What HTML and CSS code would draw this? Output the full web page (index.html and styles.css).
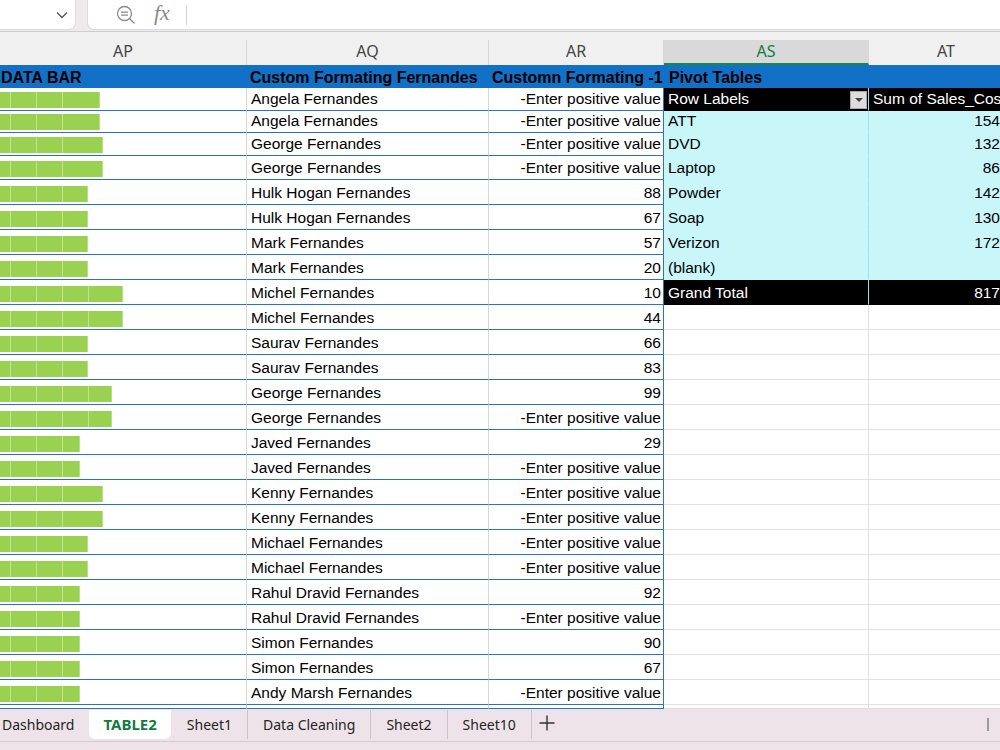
FILE: index.html
```html
<!DOCTYPE html>
<html lang="en">
<head>
  <meta charset="UTF-8" />
  <title>TABLE2</title>
  <link rel="stylesheet" href="styles.css">
</head>
<body>

<div class="toolbar">
  <div class="namebox">
    <svg width="12" height="8" viewBox="0 0 12 8"><path d="M1 1.5 L6 6.5 L11 1.5" fill="none" stroke="#555" stroke-width="1.3"/></svg>
  </div>
  <div class="formula">
    <svg width="20" height="20" viewBox="0 0 20 20"><circle cx="8.5" cy="8.5" r="7" fill="none" stroke="#8a8a8a" stroke-width="1.3"/><path d="M5 7.2 H12 M5 10.2 H12 M13.5 13.5 L18.5 18.5" stroke="#8a8a8a" stroke-width="1.3" fill="none"/></svg>
    <span class="fx">fx</span>
    <span class="sep"></span>
  </div>
</div>

<div class="colheads">
  <div class="ch">AP</div>
  <div class="ch">AQ</div>
  <div class="ch">AR</div>
  <div class="ch sel">AS</div>
  <div class="ch">AT</div>
</div>

<div class="sheet">
  <div class="row hdr">
    <div class="c">DATA BAR</div>
    <div class="c">Custom Formating Fernandes</div>
    <div class="c">Customn Formating -1</div>
    <div class="c pt">Pivot Tables</div>
  </div>

  <div class="row h23">
    <div class="c bar"><div class="db" style="width:100px"></div></div>
    <div class="c">Angela Fernandes</div>
    <div class="c ar">-Enter positive value</div>
    <div class="c pk">Row Labels<span class="dd"></span></div>
    <div class="c pk">Sum of Sales_Cost</div>
  </div>
  <div class="row h22">
    <div class="c bar"><div class="db" style="width:100px"></div></div>
    <div class="c">Angela Fernandes</div>
    <div class="c ar">-Enter positive value</div>
    <div class="c p">ATT</div>
    <div class="c p num">154</div>
  </div>
  <div class="row h23">
    <div class="c bar"><div class="db" style="width:103px"></div></div>
    <div class="c">George Fernandes</div>
    <div class="c ar">-Enter positive value</div>
    <div class="c p">DVD</div>
    <div class="c p num">132</div>
  </div>
  <div class="row h24">
    <div class="c bar"><div class="db" style="width:103px"></div></div>
    <div class="c">George Fernandes</div>
    <div class="c ar">-Enter positive value</div>
    <div class="c p">Laptop</div>
    <div class="c p num">86</div>
  </div>
  <div class="row">
    <div class="c bar"><div class="db" style="width:88px"></div></div>
    <div class="c">Hulk Hogan Fernandes</div>
    <div class="c ar">88</div>
    <div class="c p">Powder</div>
    <div class="c p num">142</div>
  </div>
  <div class="row">
    <div class="c bar"><div class="db" style="width:88px"></div></div>
    <div class="c">Hulk Hogan Fernandes</div>
    <div class="c ar">67</div>
    <div class="c p">Soap</div>
    <div class="c p num">130</div>
  </div>
  <div class="row">
    <div class="c bar"><div class="db" style="width:88px"></div></div>
    <div class="c">Mark Fernandes</div>
    <div class="c ar">57</div>
    <div class="c p">Verizon</div>
    <div class="c p num">172</div>
  </div>
  <div class="row">
    <div class="c bar"><div class="db" style="width:88px"></div></div>
    <div class="c">Mark Fernandes</div>
    <div class="c ar">20</div>
    <div class="c p">(blank)</div>
    <div class="c p num"></div>
  </div>
  <div class="row">
    <div class="c bar"><div class="db" style="width:123px"></div></div>
    <div class="c">Michel Fernandes</div>
    <div class="c ar">10</div>
    <div class="c pk">Grand Total</div>
    <div class="c pk num">817</div>
  </div>
  <div class="row">
    <div class="c bar"><div class="db" style="width:123px"></div></div>
    <div class="c">Michel Fernandes</div>
    <div class="c ar">44</div>
    <div class="c e"></div>
    <div class="c e"></div>
  </div>
  <div class="row">
    <div class="c bar"><div class="db" style="width:88px"></div></div>
    <div class="c">Saurav Fernandes</div>
    <div class="c ar">66</div>
    <div class="c e"></div>
    <div class="c e"></div>
  </div>
  <div class="row">
    <div class="c bar"><div class="db" style="width:88px"></div></div>
    <div class="c">Saurav Fernandes</div>
    <div class="c ar">83</div>
    <div class="c e"></div>
    <div class="c e"></div>
  </div>
  <div class="row">
    <div class="c bar"><div class="db" style="width:112px"></div></div>
    <div class="c">George Fernandes</div>
    <div class="c ar">99</div>
    <div class="c e"></div>
    <div class="c e"></div>
  </div>
  <div class="row">
    <div class="c bar"><div class="db" style="width:112px"></div></div>
    <div class="c">George Fernandes</div>
    <div class="c ar">-Enter positive value</div>
    <div class="c e"></div>
    <div class="c e"></div>
  </div>
  <div class="row">
    <div class="c bar"><div class="db" style="width:80px"></div></div>
    <div class="c">Javed Fernandes</div>
    <div class="c ar">29</div>
    <div class="c e"></div>
    <div class="c e"></div>
  </div>
  <div class="row">
    <div class="c bar"><div class="db" style="width:80px"></div></div>
    <div class="c">Javed Fernandes</div>
    <div class="c ar">-Enter positive value</div>
    <div class="c e"></div>
    <div class="c e"></div>
  </div>
  <div class="row">
    <div class="c bar"><div class="db" style="width:103px"></div></div>
    <div class="c">Kenny Fernandes</div>
    <div class="c ar">-Enter positive value</div>
    <div class="c e"></div>
    <div class="c e"></div>
  </div>
  <div class="row">
    <div class="c bar"><div class="db" style="width:103px"></div></div>
    <div class="c">Kenny Fernandes</div>
    <div class="c ar">-Enter positive value</div>
    <div class="c e"></div>
    <div class="c e"></div>
  </div>
  <div class="row">
    <div class="c bar"><div class="db" style="width:88px"></div></div>
    <div class="c">Michael Fernandes</div>
    <div class="c ar">-Enter positive value</div>
    <div class="c e"></div>
    <div class="c e"></div>
  </div>
  <div class="row">
    <div class="c bar"><div class="db" style="width:88px"></div></div>
    <div class="c">Michael Fernandes</div>
    <div class="c ar">-Enter positive value</div>
    <div class="c e"></div>
    <div class="c e"></div>
  </div>
  <div class="row">
    <div class="c bar"><div class="db" style="width:80px"></div></div>
    <div class="c">Rahul Dravid Fernandes</div>
    <div class="c ar">92</div>
    <div class="c e"></div>
    <div class="c e"></div>
  </div>
  <div class="row">
    <div class="c bar"><div class="db" style="width:80px"></div></div>
    <div class="c">Rahul Dravid Fernandes</div>
    <div class="c ar">-Enter positive value</div>
    <div class="c e"></div>
    <div class="c e"></div>
  </div>
  <div class="row">
    <div class="c bar"><div class="db" style="width:80px"></div></div>
    <div class="c">Simon Fernandes</div>
    <div class="c ar">90</div>
    <div class="c e"></div>
    <div class="c e"></div>
  </div>
  <div class="row">
    <div class="c bar"><div class="db" style="width:80px"></div></div>
    <div class="c">Simon Fernandes</div>
    <div class="c ar">67</div>
    <div class="c e"></div>
    <div class="c e"></div>
  </div>
  <div class="row">
    <div class="c bar"><div class="db" style="width:80px"></div></div>
    <div class="c">Andy Marsh Fernandes</div>
    <div class="c ar">-Enter positive value</div>
    <div class="c e"></div>
    <div class="c e"></div>
  </div>
  <div class="row cut">
    <div class="c"></div>
    <div class="c"></div>
    <div class="c ar"></div>
    <div class="c e"></div>
    <div class="c e"></div>
  </div>
</div>

<div class="tabs">
  <div class="strip">
    <div class="tab first">Dashboard</div>
    <div class="tab active">TABLE2</div>
    <div class="tab">Sheet1</div>
    <div class="tab">Data Cleaning</div>
    <div class="tab">Sheet2</div>
    <div class="tab">Sheet10</div>
    <div class="add">
      <svg width="16" height="16" viewBox="0 0 16 16"><path d="M8 0.5 V15.5 M0.5 8 H15.5" stroke="#333" stroke-width="1.4"/></svg>
    </div>
    <div class="handle"></div>
  </div>
</div>

</body>
</html>
```

FILE: styles.css
```css
* {
  box-sizing: border-box;
}
body {
  margin: 0;
  width: 1000px;
  height: 750px;
  overflow: hidden;
  background: #fff;
  font-family: "Liberation Sans", Arial, sans-serif;
}

/* formula bar */
.toolbar {
  height: 32px;
  display: flex;
  gap: 11px;
  background: #efeaeb;
  border-bottom: 1px solid #cfcfcf;
}
.namebox {
  width: 76px;
  height: 30px;
  background: #fff;
  border: 1px solid #dcdcdc;
  border-top: 0;
  border-left: 0;
  border-radius: 0 0 7px 0;
  display: flex;
  align-items: center;
  justify-content: flex-end;
  padding-right: 7px;
}
.formula {
  flex: 1;
  height: 30px;
  background: #fff;
  border: 1px solid #dcdcdc;
  border-top: 0;
  border-right: 0;
  border-radius: 0 0 0 7px;
  display: flex;
  align-items: center;
  padding-left: 28px;
}
.fx {
  font-family: "Liberation Serif", serif;
  font-style: italic;
  font-size: 22px;
  color: #8a8a8a;
  margin-left: 18px;
  margin-top: -3px;
}
.sep {
  width: 1px;
  height: 20px;
  background: #d4d4d4;
  margin-left: 16px;
}

/* column letters */
.colheads, .row {
  display: grid;
  grid-template-columns: 247px 242px 175px 205px 132px;
}
.colheads {
  grid-template-columns: 247px 242px 175px 205px 155px;
  height: 33px;
  background: #f0f0f0;
  padding-top: 8px;
}
.ch {
  border-right: 1px solid #d6d6d6;
  text-align: center;
  font-family: "Noto Sans", "Open Sans", sans-serif;
  font-size: 16px;
  line-height: 23px;
  color: #444;
}
.ch.sel {
  background: #d9d9d9;
  color: #107c41;
  border-bottom: 2px solid #16884a;
  border-right-color: #d9d9d9;
}

/* grid */
.row {
  height: 25px;
}
.row.h22 { height: 22px; }
.row.h23 { height: 23px; }
.row.h24 { height: 24px; }
.row.cut { height: 4px; }
.c {
  display: flex;
  align-items: flex-end;
  padding: 0 3px 2px 4px;
  border-right: 1px solid #d6d6d6;
  border-bottom: 1px solid #2a72c3;
  white-space: nowrap;
  overflow: hidden;
  font-size: 15.5px;
  line-height: 18px;
  color: #000;
}
.c.ar {
  justify-content: flex-end;
  padding-right: 2px;
  border-right-color: #2a72c3;
}
.c.bar {
  padding: 0 0 2px 0;
}
.db {
  height: 16px;
  background: repeating-linear-gradient(90deg, #9bd151 0 25px, #bfe494 25px 26px);
  background-position: -15px 0;
  border-right: 1px solid #b4df86;
}
.hdr {
  height: 23px;
  background: #1270c6;
}
.hdr .c {
  border: 0;
  font-weight: bold;
  font-size: 16px;
  padding: 0 2px 1px 3px;
}
.hdr .c:first-child {
  padding-left: 1px;
}
.hdr .c.pt {
  grid-column: span 2;
  padding-left: 5px;
}

/* pivot table */
.c.p {
  background: #c9f7f9;
  border-bottom-color: #c9f7f9;
  border-right-color: #9fdfee;
}
.c.pk {
  background: #000;
  color: #fff;
  border-bottom-color: #000;
  border-right-color: #9fdfee;
}
.c.num {
  justify-content: flex-end;
  padding-right: 0;
}
.c.e {
  border-bottom-color: #e1e1e1;
  border-right-color: #e1e1e1;
}
.dd {
  width: 17px;
  height: 18px;
  margin-left: auto;
  margin-right: -2px;
  margin-bottom: -1px;
  background: #dcdcdc;
  border: 1px solid #a8a8a8;
  position: relative;
}
.dd::after {
  content: "";
  position: absolute;
  left: 4px;
  top: 6px;
  border-left: 4px solid transparent;
  border-right: 4px solid transparent;
  border-top: 4px solid #444;
}

/* sheet tabs */
.tabs {
  height: 42px;
  background: #eee3e8;
}
.strip {
  height: 33px;
  display: flex;
  align-items: flex-start;
  border-bottom: 1px solid #d4cbd0;
  padding-left: 2px;
}
.tab {
  height: 29px;
  margin-top: 1px;
  padding: 0 15px;
  font-family: "Noto Sans", "Open Sans", sans-serif;
  font-size: 14px;
  line-height: 29px;
  color: #242424;
  border-right: 1px solid #cdc3c8;
}
.tab.first {
  padding-left: 0;
  border-right: 0;
}
.tab.active {
  background: #fff;
  border-right: 0;
  border-radius: 0 0 6px 6px;
  color: #107c41;
  font-weight: bold;
  font-size: 15px;
  padding: 0 14px;
  margin-right: 1px;
}
.add {
  padding: 6px 0 0 7px;
}
.handle {
  width: 2px;
  height: 13px;
  background: #9a9a9a;
  margin: 9px 11px 0 auto;
}
```
